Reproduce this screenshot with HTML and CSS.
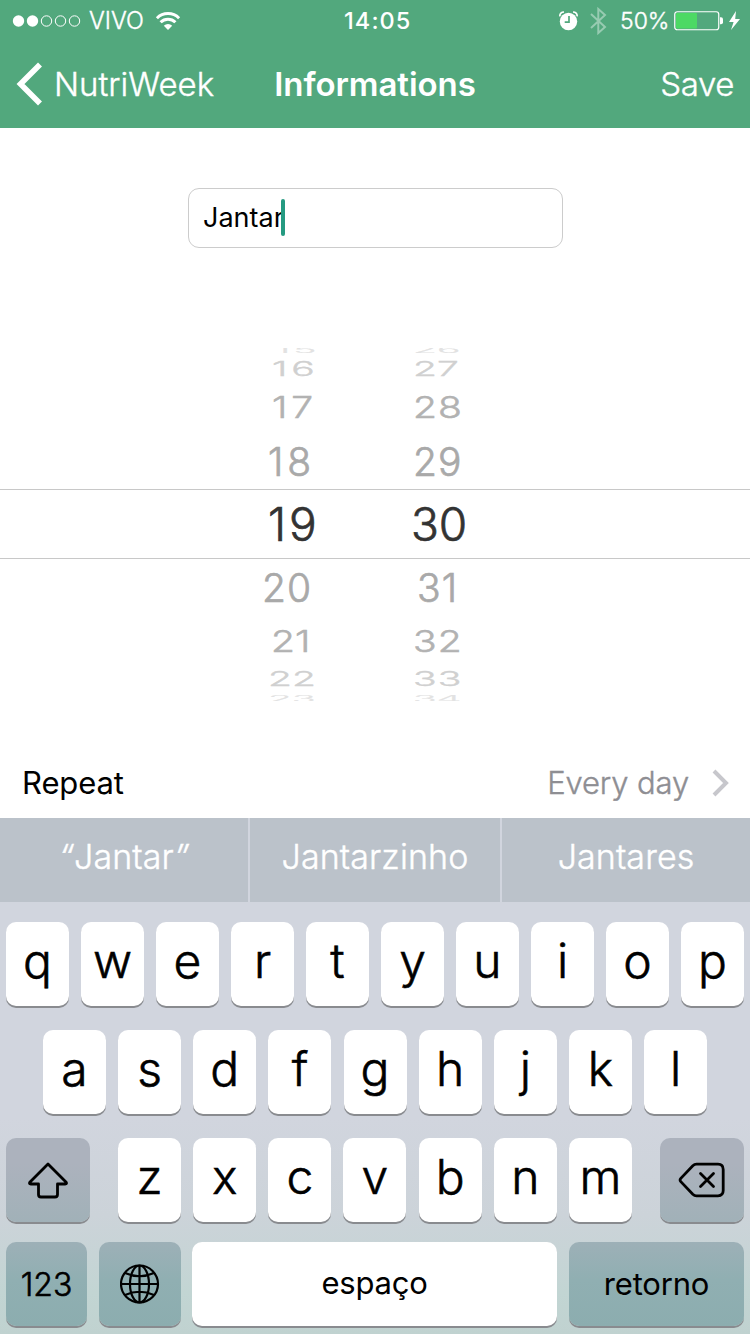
FILE: index.html
```html
<!DOCTYPE html>
<html lang="pt">
<head>
<meta charset="utf-8">
<title>Informations</title>
<link rel="stylesheet" href="styles.css">
</head>
<body>
<header class="header">
  <div class="status">
    <div class="status-left">
      <svg class="signal" width="70" height="14" viewBox="0 0 70 14"><g fill="#fff"><circle cx="6.5" cy="7" r="5.7"/><circle cx="20.5" cy="7" r="5.7"/></g><g fill="none" stroke="#fff"><circle cx="34.5" cy="7" r="5.2"/><circle cx="48.5" cy="7" r="5.2"/><circle cx="62.5" cy="7" r="5.2"/></g></svg>
      <span class="carrier">VIVO</span>
      <svg class="wifi" width="26" height="20" viewBox="0 0 26 20"><path d="M13 19l-4.2-4.2a6 6 0 0 1 8.4 0z" fill="#fff"/><path d="M5.6 11.3a10.5 10.5 0 0 1 14.8 0M1.9 7.2a15.7 15.7 0 0 1 22.2 0" fill="none" stroke="#fff" stroke-width="3"/></svg>
    </div>
    <time class="clock">14:05</time>
    <div class="status-right">
      <svg class="alarm" width="20" height="20" viewBox="0 0 20 20"><circle cx="9.5" cy="10.5" r="8.7" fill="#fff"/><path d="M.9 5.3C.6 2.5 2.5 1 5 1M18.1 5.3C18.4 2.5 16.5 1 14 1" fill="none" stroke="#fff" stroke-width="1.7"/><path d="M10 5v6.2H5.7" fill="none" stroke="#52a87d" stroke-width="1.7"/></svg>
      <svg class="bluetooth" width="17" height="28" viewBox="0 0 17 28"><path d="M1 7l14 13-6.7 6V2L15 8 1 21" fill="none" stroke="#97cbb1" stroke-width="2"/></svg>
      <span class="percent">50%</span>
      <svg class="battery" width="50" height="20" viewBox="0 0 50 20"><rect x=".75" y=".75" width="44" height="18" rx="2.5" fill="none" stroke="#fff" stroke-width="1.2"/><rect x="2" y="2" width="21" height="15.5" rx="1" fill="#4cd964"/><path d="M46 6.3h1q2 0 2 2v3q0 2-2 2h-1z" fill="#fff"/></svg>
      <svg class="bolt" width="13" height="20" viewBox="0 0 13 20"><path d="M8 0L1 11h4.6L3 19 12 8H7.2z" fill="#fff"/></svg>
    </div>
  </div>
  <nav class="navbar">
    <a class="back"><svg width="28" height="44" viewBox="0 0 28 44"><path d="M25 2.5L5.5 22l19.500 19.500" fill="none" stroke="#fff" stroke-width="5.600"/></svg><span class="back-label">NutriWeek</span></a>
    <h1 class="title">Informations</h1>
    <a class="save">Save</a>
  </nav>
</header>

<main class="content">
  <div class="field"><span class="field-text">Jantar</span><span class="caret"></span></div>
  <div class="picker">
    <div class="row edge"><span class="h h15">15</span><span class="m m26">26</span></div>
    <div class="row far"><span class="h h16">16</span><span class="m m27">27</span></div>
    <div class="row mid"><span class="h h17">17</span><span class="m m28">28</span></div>
    <div class="row near"><span class="h h18">18</span><span class="m m29">29</span></div>
    <div class="row selected"><span class="h h19">19</span><span class="m m30">30</span></div>
    <div class="row near"><span class="h h20">20</span><span class="m m31">31</span></div>
    <div class="row mid"><span class="h h21">21</span><span class="m m32">32</span></div>
    <div class="row far"><span class="h h22">22</span><span class="m m33">33</span></div>
    <div class="row edge"><span class="h h23">23</span><span class="m m34">34</span></div>
  </div>
  <div class="repeat">
    <span class="repeat-label">Repeat</span>
    <span class="repeat-value">Every day</span>
    <svg width="18" height="28" viewBox="0 0 18 28"><path d="M2 2l12 12L2 26" fill="none" stroke="#c7c7cc" stroke-width="4"/></svg>
  </div>
</main>

<section class="keyboard">
  <div class="suggestions">
    <span class="s-quoted"><i>“</i>Jantar<i>”</i></span><span class="s-mid">Jantarzinho</span><span class="s-last">Jantares</span>
  </div>
  <div class="keys top"><b>q</b><b>w</b><b>e</b><b>r</b><b>t</b><b>y</b><b>u</b><b>i</b><b>o</b><b>p</b></div>
  <div class="keys home"><b>a</b><b>s</b><b>d</b><b>f</b><b>g</b><b>h</b><b>j</b><b>k</b><b>l</b></div>
  <div class="keys lower">
    <b class="fn"><svg width="42" height="38" viewBox="0 0 42 38"><path d="M21 3L2.800 21.300q-1 1.700 1 1.700h7.700v10.500q0 2.500 2.500 2.500h14q2.500 0 2.500-2.500V23h7.700q2 0 1-1.700z" fill="none" stroke="#000" stroke-width="2.800" stroke-linejoin="round"/></svg></b>
    <div class="letters"><b>z</b><b>x</b><b>c</b><b>v</b><b>b</b><b>n</b><b>m</b></div>
    <b class="fn"><svg width="48" height="36" viewBox="0 0 48 36"><path d="M18.500 2.200H40q5.200 0 5.200 5.200v21.200q0 5.200-5.200 5.200H18.500q-2 0-3.700-1.600L2.800 19.600q-1.400-1.600 0-3.200l12-12.600q1.700-1.600 3.700-1.600z" fill="none" stroke="#000" stroke-width="2.800"/><path d="M22.500 11.500l13 13M35.500 11.500l-13 13" stroke="#000" stroke-width="2.800" stroke-linecap="round"/></svg></b>
  </div>
  <div class="keys action">
    <b class="fn digits">123</b>
    <b class="fn"><svg width="40" height="40" viewBox="0 0 40 40"><g fill="none" stroke="#000" stroke-width="2.200"><circle cx="19.500" cy="20" r="18.500"/><ellipse cx="19.500" cy="20" rx="9.500" ry="18.500"/><path d="M19.500 1.500v37M1 20h37M5 9q14.500 6.500 29 0M5 31q14.500-6.500 29 0"/></g></svg></b>
    <b class="word space">espaço</b>
    <b class="fn word return">retorno</b>
  </div>
</section>
</body>
</html>
```

FILE: styles.css
```css
* { box-sizing: border-box; }
body { margin: 0; width: 750px; height: 1334px; overflow: hidden; background: #fff; color: #000; font-family: Inter, "Noto Sans", sans-serif; display: flex; flex-direction: column; }
svg { display: block; flex: none; }

/* Status and navigation bars */
.header { height: 128px; flex: none; background: #52a87d; color: #fff; }
.status { height: 40px; display: grid; grid-template-columns: 344px 67px 339px; align-items: center; font-size: 23.5px; line-height: 41px; }
.status-left, .status-right { display: flex; align-items: center; height: 40px; }
.status-left { padding-left: 12px; }
.carrier { margin-left: 7px; width: 66px; }
.clock { font-weight: 550; letter-spacing: 1.1px; white-space: nowrap; }
.status-right { justify-content: flex-end; padding-right: 9px; }
.bluetooth { margin-left: 11px; }
.percent { margin-left: 13px; width: 54px; font-size: 23px; line-height: 42px; white-space: nowrap; }
.bolt { margin-left: 4px; }
.carrier, .percent, .back, .save, .repeat-value, .suggestions { font-weight: 300; -webkit-text-stroke: .4px currentColor; }
.navbar { height: 88px; display: grid; grid-template-columns: 1fr auto 1fr; align-items: center; padding: 0 16px 0 15px; font-size: 33px; line-height: 88px; }
.back { display: flex; align-items: center; }
.back-label { margin-left: 11px; }
.title { margin: 0 0 0 1px; font-size: 33px; font-weight: 600; letter-spacing: -.05px; }
.save { justify-self: end; letter-spacing: -.4px; }

/* Form */
.content { height: 690px; flex: none; padding-top: 60px; }
.field { width: 375px; height: 60px; margin: 0 auto 100px 188px; border: 1px solid #ccc; border-radius: 11px; display: flex; align-items: center; padding: 0 0 2px 14px; font-size: 27px; }
.caret { width: 4px; height: 37px; margin-left: -3px; border-radius: 2px; background: #259a81; }
.picker { height: 353px; overflow: hidden; display: grid; grid-template-rows: 9px 24px 52px 56px 70px 56px 52px 24px 10px; }
.row { display: grid; grid-template-columns: 375px 375px; grid-template-rows: minmax(0, 1fr); min-height: 0; align-items: center; font-size: 39px; font-weight: 300; -webkit-text-stroke: .7px currentColor; line-height: 1; }
.row span { display: block; justify-self: start; transform-origin: left center; }
.h { margin-left: 268px; }
.m { margin-left: 38px; }
.h15 { margin-left: 275px; letter-spacing: 3px; }
.h16, .h17 { margin-left: 272px; letter-spacing: 4px; }
.h18 { letter-spacing: 4px; }
.h19 { letter-spacing: 3px; }
.h20 { margin-left: 262px; letter-spacing: 1px; }
.h21 { margin-left: 271px; }
.m31 { margin-left: 42px; letter-spacing: 1px; }
.m28, .m29, .m32, .m33 { letter-spacing: 1px; }
.selected { border: solid #c8c8c8; border-width: 1px 0; color: #333; font-size: 46px; }
.m30 { margin-left: 36px; }
.near { color: #a9a9a9; }
.mid { color: #b2b2b2; }
.mid span { transform: translateY(-1px) scaleY(.78); }
.far { color: #d0d0d0; }
.far span { transform: translateY(-.5px) scaleY(.5); }
/* Outermost rows are squashed to fit inside the wheel's 10px rim. */
.edge { color: #e2e2e2; overflow: hidden; }
.edge span { height: 9px; line-height: 9px; transform: translateY(-3px) scaleY(.22); }
.edge:last-child span { transform: translateY(2px) scaleY(.22); }
.repeat { height: 70px; margin-top: 47px; display: flex; align-items: center; padding: 0 20px 0 22px; font-size: 31px; line-height: 68px; }
.repeat-label { letter-spacing: -.1px; margin-top: -1px; }
.repeat-value { margin-left: auto; color: #8e8e93; letter-spacing: -.15px; margin-top: -1px; }
.repeat svg { margin-left: 23px; }

/* Keyboard */
.keyboard { height: 516px; flex: none; background: linear-gradient(#d1d5de 0 58%, #ccd3d9 77%, #c2d5d3 92%, #c0d2d0); }
.suggestions { height: 84px; margin-bottom: 20px; display: grid; grid-template-columns: 248px 250px 248px; gap: 2px; background: #d1d5de; color: #fff; font-size: 34px; line-height: 78px; letter-spacing: .1px; text-align: center; }
.suggestions span { background: #bbc2ca; }
.keys { display: grid; height: 84px; margin-bottom: 24px; font-size: 48px; line-height: 78px; }
.keys b { height: 84px; border-radius: 10px; background: #fff; box-shadow: 0 2px 0 #898b8f; font-weight: 300; -webkit-text-stroke: .6px #000; text-align: center; }
.top { grid-template-columns: repeat(10, 63px); gap: 12px; padding-left: 6px; }
.home { grid-template-columns: repeat(9, 63px); gap: 12.15px; padding-left: 43px; }
.lower { grid-template-columns: 84px 514px 84px; gap: 28px; padding-left: 6px; margin-bottom: 20px; }
.letters { display: grid; grid-template-columns: repeat(7, 63px); gap: 12.17px; }
.keys .fn { display: flex; align-items: center; justify-content: center; background: linear-gradient(#acb2bd 0 30%, #a1b1b8); }
.action { grid-template-columns: 81px 82px 365px 175px; column-gap: 12px; padding-left: 6px; margin: 0; }
.action .fn { background: linear-gradient(#9db0b7, #90afb2 45%, #8cadaf); }
.keys .space { margin-left: -1px; margin-right: 1px; }
.keys .return { margin-left: -1px; margin-right: 1px; }
.keys .digits { font-size: 32px; padding-top: 2px; }
.keys .word { font-size: 31px; font-weight: 400; -webkit-text-stroke: 0; line-height: 82px; letter-spacing: -.2px; }
```
